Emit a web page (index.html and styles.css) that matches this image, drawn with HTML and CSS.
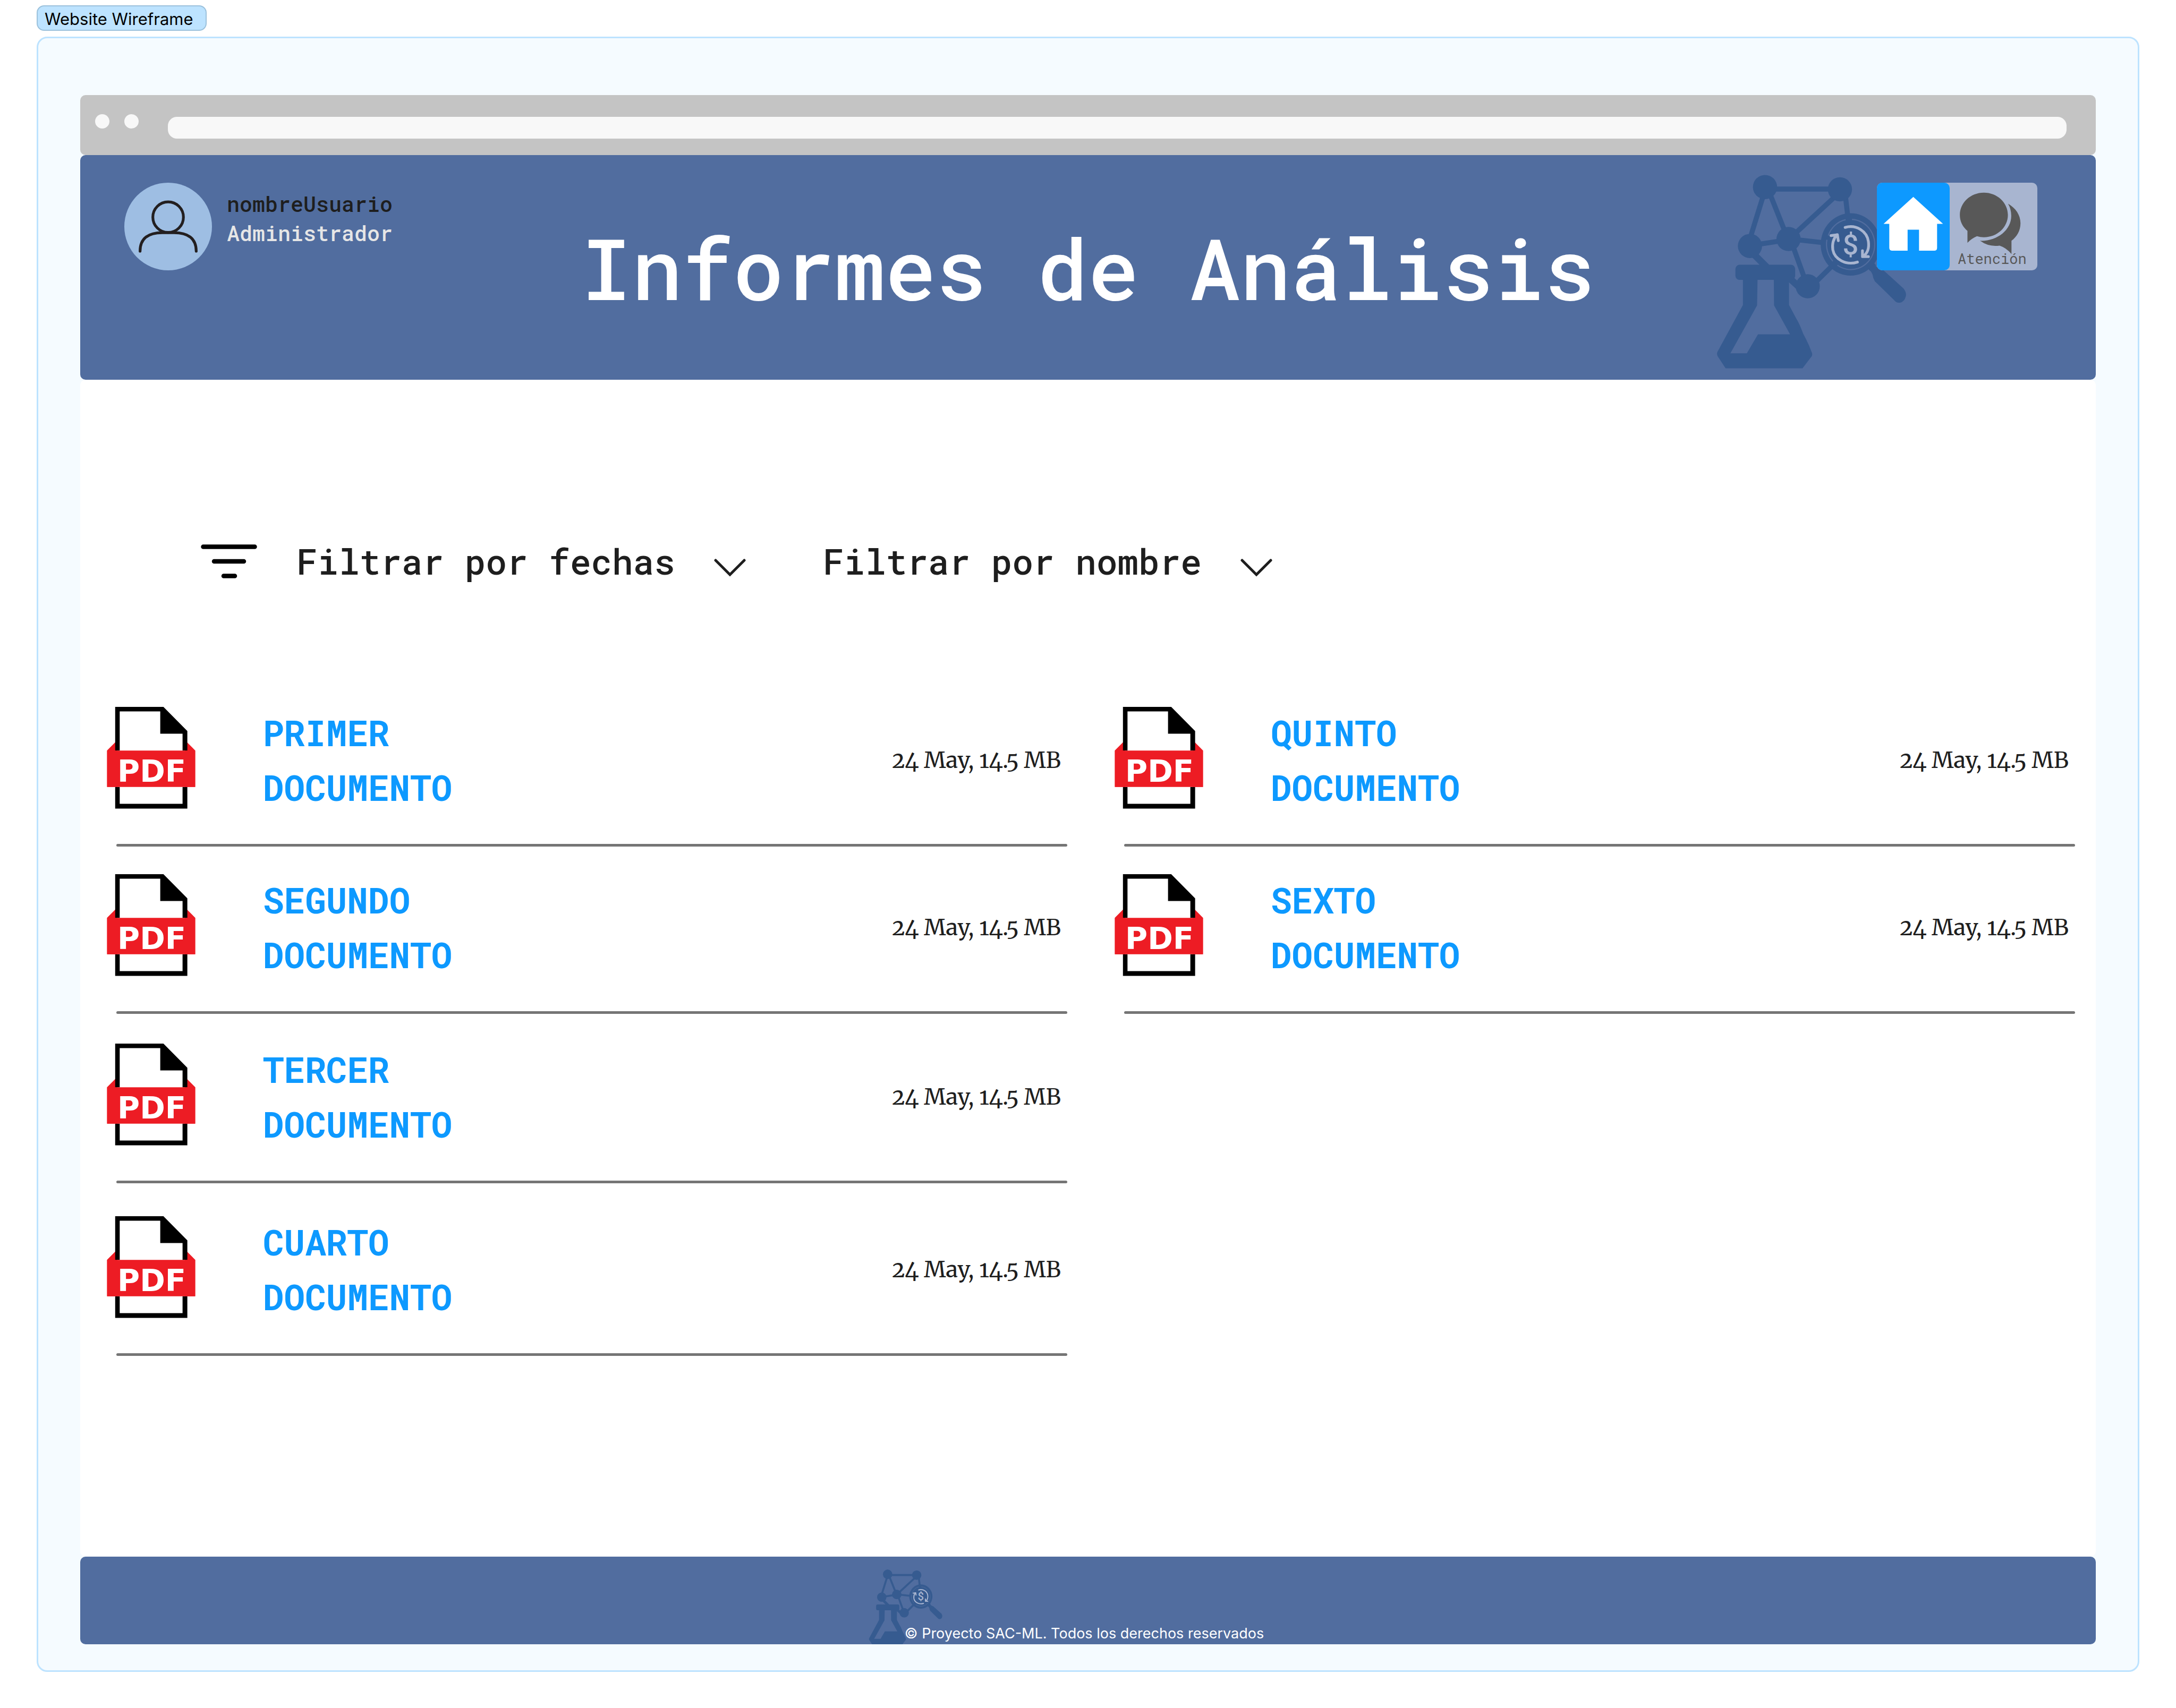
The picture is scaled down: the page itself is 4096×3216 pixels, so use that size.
FILE: index.html
```html
<!DOCTYPE html>
<html lang="es">
<head>
<meta charset="utf-8">
<meta name="viewport" content="width=device-width, initial-scale=1">
<title>Informes de Análisis</title>
<link rel="stylesheet" href="styles.css">
</head>
<body>
<svg class="sprite" aria-hidden="true">
  <symbol id="logo" viewBox="60 40 420 432">
    <g fill="none" stroke="#365b90" stroke-width="11">
      <path d="M167 75H332M165 85L134 185M174 75L219 188M328 85L225 180M343 85L350 145M134 199L219 186M219 184L300 193M225 190L261 290M261 296L322 236"/>
      <path stroke-width="15" d="M138 213L175 250M215 265L245 292"/>
      <path stroke-width="18" d="M390 232L404 248"/>
    </g>
    <g fill="#365b90">
      <circle cx="167.400" cy="70.500" r="26.500"/>
      <circle cx="331.600" cy="75.500" r="26.500"/>
      <circle cx="219" cy="184.500" r="26.500"/>
      <circle cx="134.400" cy="199.700" r="26.500"/>
      <circle cx="261" cy="288" r="26.500"/>
      <ellipse cx="355" cy="196.300" rx="65.500" ry="68.500"/>
      <path d="M407 239Q411 248 426 252L471 293Q478 302 476 310Q473 322 463 324Q455 325 450 318L408 277Q404 270 403 262Q401 256 395 251Z"/>
      <rect x="102.500" y="241" width="131" height="33" rx="9"/>
      <path fill-rule="evenodd" d="M119 270V329L63 432Q61 437 64 442L81 468H249.500L270 441Q272 437 269 431Q266 423 264 418Q258 405 251 392Q243 370 236 359L220 329V270ZM151 274H186.700L187.200 330L222.300 393.300H152L127.600 435H91.500L150 330Z"/>
    </g>
    <path fill="none" stroke="#516d9f" stroke-width="2.500" d="M358 141.500A52.500 55 0 1 1 326 242M316 233A52.500 55 0 0 1 303 186M306 177A52.500 55 0 0 1 344 142"/>
    <g fill="none" stroke="#a8b5d0" stroke-width="6" stroke-linecap="round" stroke-linejoin="round">
      <path d="M343 159C368 152 391 168 394 190C396 205 391 216 383 222M381 210V223H394"/>
      <path d="M370 235C345 243 320 229 316 208C314 194 317 184 325 175M312 177L326 175L328 188"/>
    </g>
  </symbol>
  <symbol id="pdf" viewBox="0 0 194 224">
    <path fill="#ed1c24" d="M18 78L0 96V176H194V96L176 78Z"/>
    <path fill="#fff" d="M23 5H122L171 54V219H23Z"/>
    <path d="M18 0H124L176.500 53V96H166V59H117V10H28V96H18Z"/>
    <path d="M18 176H28V213H166V176H176.500V223.500H18Z"/>
    <path fill="#ed1c24" d="M0 96H194V176H0Z"/>
  </symbol>
  <symbol id="chevron" viewBox="0 0 60 34">
    <path fill="none" stroke="#1e1e1e" stroke-width="5" stroke-linecap="round" d="M3 3L30 30L57 3"/>
  </symbol>
</svg>

<div class="tag">Website Wireframe</div>
<div class="frame">
  <div class="browser-bar">
    <span class="dot"></span>
    <span class="dot"></span>
    <input class="address" type="text" aria-label="Dirección">
  </div>

  <header class="header">
    <svg class="header-logo" viewBox="0 0 420 432" aria-hidden="true"><use href="#logo" width="420" height="432"/><text class="coin" x="295" y="178">$</text></svg>
    <div class="user">
      <svg class="avatar" viewBox="0 0 192 192" aria-hidden="true">
        <circle cx="96" cy="96" r="96" fill="#9ebee3"/>
        <g fill="none" stroke="#231f20" stroke-width="6" stroke-linecap="round">
          <circle cx="96" cy="75.500" r="33.500"/>
          <path d="M34.500 150C34.500 121 54 109.500 83 109.500H109C138 109.500 157.500 121 157.500 150"/>
        </g>
      </svg>
      <div class="user-text">
        <span class="user-name">nombreUsuario</span>
        <span class="user-role">Administrador</span>
      </div>
    </div>
    <h1 class="title">Informes de Análisis</h1>
    <nav class="nav">
      <a class="home" href="#inicio" aria-label="Inicio">
        <svg class="home-icon" viewBox="0 0 160 192" aria-hidden="true">
          <path fill="#fff" d="M80 31L145.400 90.300H132.300V143Q132.300 149 127 149H92.600V103H67.500V149H33Q27.200 149 27.200 143V90.300H14.600Z"/>
        </svg>
      </a>
      <a class="help" href="#atencion">
        <svg class="help-icon" viewBox="0 0 192 160" aria-hidden="true">
          <g fill="#585858">
            <path d="M74.800 22C104 22 127.600 44 127.600 71S104 120 74.800 120Q67 120 59.600 117.700Q47 123 38.700 132.300V106Q22 92 22 71C22 44 45.600 22 74.800 22Z"/>
            <path d="M128 46C145 56 155.300 71 155.300 89C155.300 106 147 119 135.500 127.700V156.700Q124 143 109.300 138.300Q86 142 66.400 127.700C104 129 135 104 135 73Q135 58 128 46Z"/>
          </g>
        </svg>
        <span class="help-label">Atención</span>
      </a>
    </nav>
  </header>

  <main class="main">
    <form class="filters">
      <svg class="filter-icon" viewBox="0 0 106 64" aria-hidden="true">
        <path fill="none" stroke="#000" stroke-width="8.500" stroke-linecap="round" d="M4.500 4.500H101.500M25 32H81M43 59.500H64"/>
      </svg>
      <label class="filter">
        <select class="filter-select" aria-label="Filtrar por fechas"><option>Filtrar por fechas</option></select>
        <svg class="chevron" aria-hidden="true"><use href="#chevron"/></svg>
      </label>
      <label class="filter">
        <select class="filter-select" aria-label="Filtrar por nombre"><option>Filtrar por nombre</option></select>
        <svg class="chevron" aria-hidden="true"><use href="#chevron"/></svg>
      </label>
    </form>

    <ul class="documents">
      <li class="document">
        <svg class="pdf" viewBox="0 0 194 224" aria-hidden="true"><use href="#pdf" width="194" height="224"/><text class="pdf-text" x="23" y="164">PDF</text></svg>
        <a class="document-name" href="#primer">PRIMER DOCUMENTO</a>
        <span class="document-meta">24 May, 14.5 MB</span>
      </li>
      <li class="document">
        <svg class="pdf" viewBox="0 0 194 224" aria-hidden="true"><use href="#pdf" width="194" height="224"/><text class="pdf-text" x="23" y="164">PDF</text></svg>
        <a class="document-name" href="#segundo">SEGUNDO DOCUMENTO</a>
        <span class="document-meta">24 May, 14.5 MB</span>
      </li>
      <li class="document">
        <svg class="pdf" viewBox="0 0 194 224" aria-hidden="true"><use href="#pdf" width="194" height="224"/><text class="pdf-text" x="23" y="164">PDF</text></svg>
        <a class="document-name" href="#tercer">TERCER DOCUMENTO</a>
        <span class="document-meta">24 May, 14.5 MB</span>
      </li>
      <li class="document">
        <svg class="pdf" viewBox="0 0 194 224" aria-hidden="true"><use href="#pdf" width="194" height="224"/><text class="pdf-text" x="23" y="164">PDF</text></svg>
        <a class="document-name" href="#cuarto">CUARTO DOCUMENTO</a>
        <span class="document-meta">24 May, 14.5 MB</span>
      </li>
      <li class="document">
        <svg class="pdf" viewBox="0 0 194 224" aria-hidden="true"><use href="#pdf" width="194" height="224"/><text class="pdf-text" x="23" y="164">PDF</text></svg>
        <a class="document-name" href="#quinto">QUINTO DOCUMENTO</a>
        <span class="document-meta">24 May, 14.5 MB</span>
      </li>
      <li class="document">
        <svg class="pdf" viewBox="0 0 194 224" aria-hidden="true"><use href="#pdf" width="194" height="224"/><text class="pdf-text" x="23" y="164">PDF</text></svg>
        <a class="document-name" href="#sexto">SEXTO DOCUMENTO</a>
        <span class="document-meta">24 May, 14.5 MB</span>
      </li>
    </ul>
  </main>

  <footer class="footer">
    <svg class="footer-logo" viewBox="0 0 420 432" aria-hidden="true"><use href="#logo" width="420" height="432"/><text class="coin" x="295" y="178">$</text></svg>
    <p class="copyright">© Proyecto SAC-ML. Todos los derechos reservados</p>
  </footer>
</div>
</body>
</html>
```
FILE: styles.css
```css
* { box-sizing: border-box; }

body {
  display: flex;
  flex-direction: column;
  align-items: stretch;
  min-height: 100vh;
  margin: 0;
  padding: 10px 69px 68px;
  background: #fff;
  color: #1e1e1e;
  font-family: "Roboto Mono", "DejaVu Sans Mono", monospace;
  font-weight: 500;
}

a { color: inherit; text-decoration: none; }

.sprite { position: absolute; width: 0; height: 0; }

.tag {
  align-self: flex-start;
  margin-bottom: 11px;
  padding: 4px 23px 0 13px;
  border: 2px solid #9bc1dc;
  border-radius: 14px;
  background: #bde3ff;
  color: #000;
  font: 400 31px/40px Inter, sans-serif;
}

.frame {
  display: flex;
  flex: 1;
  flex-direction: column;
  padding: 107px 79px 49px;
  border: 3px solid #bde3ff;
  border-radius: 20px;
  background: #f5fbff;
}

.browser-bar {
  display: flex;
  align-items: flex-start;
  gap: 28px;
  padding: 36px 55px 31px 28px;
  border-radius: 10px;
  background: #c4c4c4;
}

.dot {
  width: 27px;
  height: 27px;
  border-radius: 50%;
  background: #f8f8f8;
}

.address {
  flex: 1;
  height: 41px;
  margin: 5px 0 0 27px;
  padding: 0 16px;
  border: 0;
  border-radius: 17px;
  background: #f8f8f8;
  font: 24px/41px Inter, sans-serif;
}

.header {
  position: relative;
  display: grid;
  grid-template-columns: 1fr auto 1fr;
  align-items: start;
  min-height: 423px;
  padding: 52px 110px 52px 83px;
  border-radius: 10px;
  background: #516d9f;
}

.header-logo {
  position: absolute;
  top: 34px;
  right: 354px;
  width: 361px;
  height: 371px;
}

.coin {
  fill: #a8b5d0;
  font-family: Roboto, sans-serif;
  font-size: 61px;
  font-weight: 500;
  text-anchor: middle;
}

.user { display: flex; gap: 28px; }

.avatar { width: 165px; height: 165px; }

.user-text {
  display: flex;
  flex-direction: column;
  padding-top: 12px;
  font-size: 40px;
  line-height: 55px;
}

.user-role { color: #e6e6e6; }

.title {
  margin: 0;
  padding: 67px 0 0 27px;
  color: #fff;
  font-size: 159px;
  font-weight: 500;
  line-height: 184px;
}

.nav {
  position: relative;
  display: flex;
  justify-self: end;
  border-radius: 10px;
  background: #a8b5d0;
}

.home {
  width: 137px;
  height: 165px;
  border-radius: 10px;
  background: #0d99ff;
}

.home-icon { display: block; width: 137px; height: 165px; }

.help {
  display: flex;
  flex-direction: column;
  width: 165px;
  color: #585858;
}

.help-icon { width: 165px; height: 137px; margin-bottom: -10px; }

.help-label { padding-left: 15px; font-size: 27px; font-weight: 400; line-height: 32px; }

.main {
  flex: 1;
  padding: 300px 0 0;
  border-radius: 10px;
  background: #fff;
}

.filters {
  display: flex;
  align-items: center;
  padding: 0 227px;
}

.filter-icon { width: 106px; height: 64px; margin-right: 74px; }

.filter {
  display: flex;
  align-items: center;
  gap: 73px;
  margin-right: 145px;
}

.filter-select {
  padding: 0;
  border: 0;
  appearance: none;
  background: none;
  color: inherit;
  font: 500 66px/84px "Roboto Mono", "DejaVu Sans Mono", monospace;
}

.chevron { width: 60px; height: 34px; margin-top: 24px; }

.documents {
  display: grid;
  grid-template-columns: 1fr 1fr;
  grid-template-rows: minmax(315px, auto) minmax(319px, auto) minmax(325px, auto) auto;
  grid-auto-flow: column;
  align-items: start;
  margin: 0;
  padding: 229px 0 0;
  list-style: none;
}

.document {
  display: grid;
  grid-template-columns: 167px 400px 1fr;
  column-gap: 127px;
  padding: 0 39px 0 50px;
}

.document::after {
  grid-column: 1 / -1;
  height: 5px;
  margin: 55px 0 0 18px;
  border-radius: 3px;
  background: #757575;
  content: "";
}

.pdf { width: 167px; height: 192px; margin-top: 3px; }

.pdf-text {
  fill: #fff;
  font-family: "DejaVu Sans", sans-serif;
  font-size: 67px;
  font-weight: 700;
}

.document-name {
  color: #0d99ff;
  font-size: 66px;
  font-weight: 700;
  line-height: 103px;
}

.document-meta {
  align-self: center;
  justify-self: end;
  padding-right: 12px;
  font-family: Merriweather, "Liberation Serif", serif;
  font-size: 42px;
  font-variant-numeric: oldstyle-nums;
  font-weight: 400;
  line-height: 56px;
}

.footer {
  position: relative;
  display: flex;
  align-items: flex-end;
  justify-content: center;
  min-height: 165px;
  padding-right: 14px;
  overflow: hidden;
  border-radius: 10px;
  background: #516d9f;
}

.footer-logo {
  position: absolute;
  top: 23px;
  left: calc(50% - 413px);
  width: 140px;
  height: 144px;
}

.copyright {
  position: relative;
  margin: 0;
  color: #fff;
  font: 400 27px/40px Inter, sans-serif;
}
```
